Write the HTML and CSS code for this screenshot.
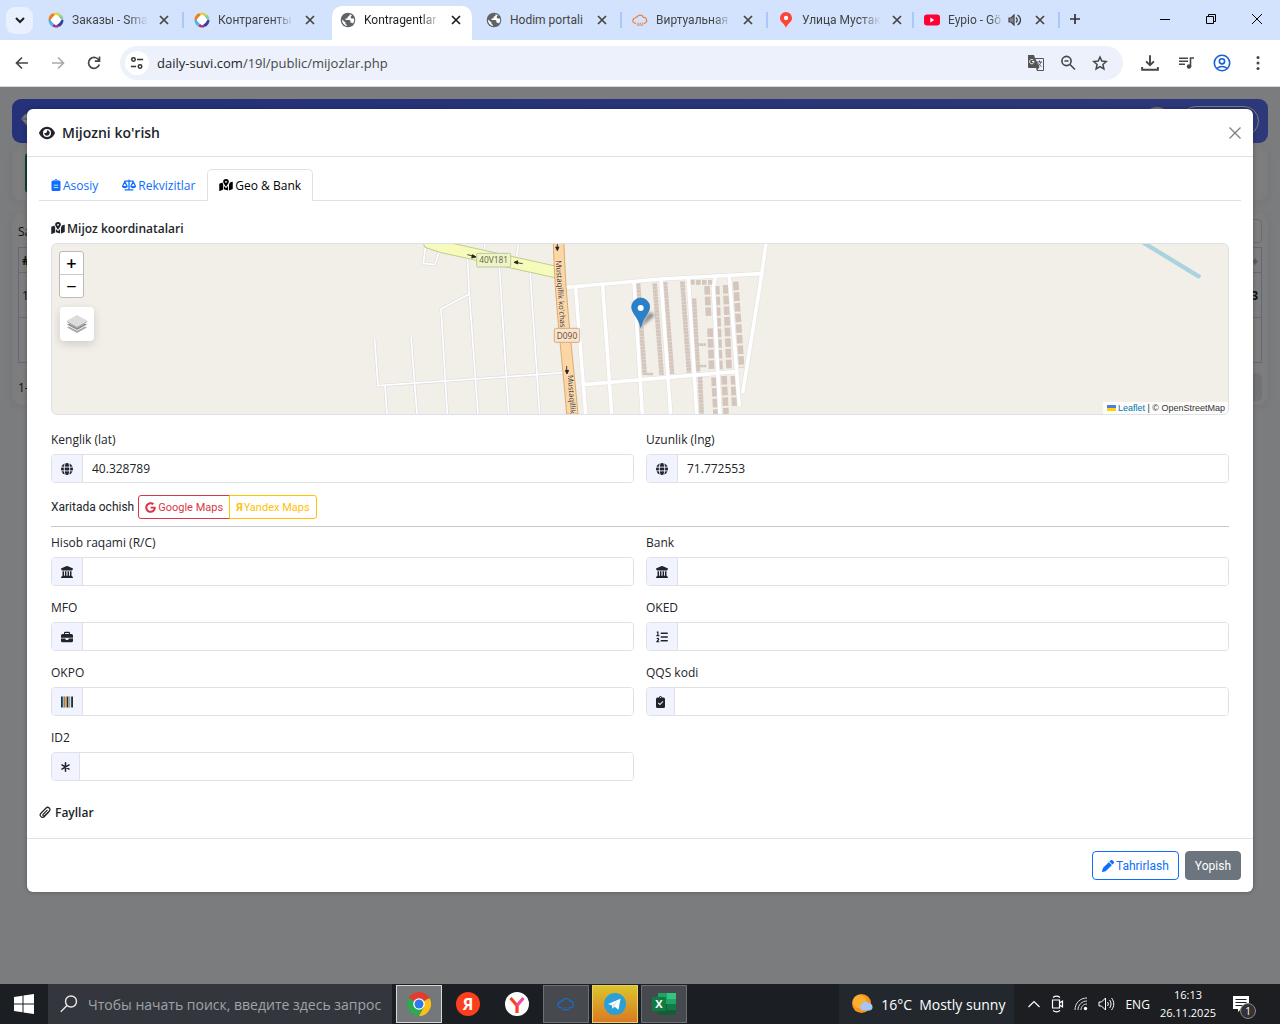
FILE: index.html
```html
<!DOCTYPE html>
<html lang="uz">
<head>
    <meta charset="UTF-8">
    <meta name="viewport" content="width=device-width, initial-scale=1.0">
    <title>Kontragentlar</title>
    <link rel="stylesheet" href="styles.css">
</head>
<body>
    <svg class="sprite" aria-hidden="true">
        <symbol id="i-close" viewBox="0 0 12 12"><path d="M2 2l8 8M10 2l-8 8" fill="none" stroke="currentColor" stroke-width="1.7"/></symbol>
        <symbol id="i-globe" viewBox="0 0 16 16">
            <circle cx="8" cy="8" r="7.3" fill="#5f6368"/>
            <path d="M9.500 2.200v1.500L7.500 5v1.500H5.500V8H9.500l1 1v1.800h1.800l.7 1A6 6 0 0 0 14 6.500h-2.500L10.500 5 12 3.200zM2 7.500 5.500 10.500V12l1.500 1v1A6.200 6.200 0 0 1 2 7.500z" fill="#fff"/>
        </symbol>
        <symbol id="i-ring" viewBox="0 0 16 16">
            <g fill="none" stroke-width="3">
                <path d="M2 8a6 6 0 0 1 4-5.6" stroke="#ef7d1a"/>
                <path d="M6 2.300a6 6 0 0 1 6 1.200" stroke="#d9d640"/>
                <path d="M12 3.500A6 6 0 0 1 14 8" stroke="#8cc9a0"/>
                <path d="M14 8a6 6 0 0 1-4 5.700" stroke="#3a3f9e"/>
                <path d="M10 13.700a6 6 0 0 1-5-.6" stroke="#a6327c"/>
                <path d="M5 13.100A6 6 0 0 1 2 8" stroke="#4ab5e6"/>
            </g>
            <rect x="4" y="4" width="8" height="8" rx="1" fill="#fff" transform="rotate(45 8 8)"/>
        </symbol>
        <symbol id="i-cloud" viewBox="0 0 24 20">
            <path d="M6 15H5.500a4 4 0 0 1-.5-8 4 4 0 0 1 3-2 5 5 0 0 1 9 1 4.300 4.300 0 0 1 5 4.200A4.500 4.500 0 0 1 18.500 15H18" fill="none" stroke="currentColor" stroke-width="1.8"/>
            <path d="M8 15h2M11.500 15h2M15 15h2M7 17.500h10" stroke="currentColor" stroke-width="1.5"/>
        </symbol>
        <symbol id="i-eye" viewBox="0 0 576 512"><path fill="currentColor" d="M288 32c-80.800 0-145.500 36.800-192.600 80.600C48.600 156 17.300 208 2.500 243.700c-3.300 7.900-3.300 16.700 0 24.600C17.300 304 48.600 356 95.400 399.400 142.500 443.200 207.200 480 288 480s145.500-36.800 192.600-80.600c46.800-43.500 78.100-95.400 93-131.100 3.300-7.900 3.300-16.700 0-24.600-14.900-35.700-46.200-87.700-93-131.100C433.500 68.800 368.800 32 288 32zM144 256a144 144 0 1 1 288 0 144 144 0 1 1-288 0zm144-64c0 35.300-28.700 64-64 64-7.100 0-13.900-1.200-20.300-3.300-5.500-1.800-11.900 1.600-11.700 7.400.3 6.900 1.300 13.800 3.200 20.700 13.700 51.200 66.400 81.600 117.600 67.900s81.600-66.400 67.900-117.600c-11.100-41.500-47.800-69.400-88.600-71.100-5.800-.2-9.200 6.100-7.400 11.700 2.100 6.400 3.300 13.200 3.300 20.300z"/></symbol>
        <symbol id="i-clipboard" viewBox="0 0 12 16">
            <path fill="currentColor" fill-rule="evenodd" d="M6 0a2 2 0 0 0-1.900 2H2a2 2 0 0 0-2 2v10a2 2 0 0 0 2 2h8a2 2 0 0 0 2-2V4a2 2 0 0 0-2-2H7.900A2 2 0 0 0 6 0zm0 1.300a.7.7 0 1 1 0 1.400.7.7 0 0 1 0-1.400zM3 7.500h6v1H3zM3 10.500h6v1H3z"/>
        </symbol>
        <symbol id="i-check" viewBox="0 0 12 16">
            <path fill="currentColor" fill-rule="evenodd" d="M6 0a2 2 0 0 0-1.900 2H2a2 2 0 0 0-2 2v10a2 2 0 0 0 2 2h8a2 2 0 0 0 2-2V4a2 2 0 0 0-2-2H7.900A2 2 0 0 0 6 0zm0 1.300a.7.7 0 1 1 0 1.400.7.7 0 0 1 0-1.400zM9.800 7.700 5.300 12.400 2.500 9.700l1-1.100 1.800 1.600 3.500-3.600z"/>
        </symbol>
        <symbol id="i-scale" viewBox="0 0 20 16">
            <path fill="none" stroke="currentColor" stroke-width="1.8" stroke-linecap="round" d="M4 2.500h12M10 1v13.500M4.500 15h11M4 3.500.9 9.500M4 3.500l3.100 6M16 3.500l-3.100 6M16 3.500l3.100 6"/>
            <path fill="currentColor" d="M0 9.500h8a4 3 0 0 1-8 0zM12 9.500h8a4 3 0 0 1-8 0z"/>
        </symbol>
        <symbol id="i-mapped" viewBox="0 0 18 16">
            <path fill="currentColor" fill-rule="evenodd" d="M9 0a3.800 3.800 0 0 0-3.800 3.800C5.200 5.500 7.400 8.500 8.500 9.800a.6.6 0 0 0 1 0c1.100-1.300 3.300-4.300 3.300-6A3.800 3.800 0 0 0 9 0zm0 2.500a1.300 1.300 0 1 1 0 2.600 1.300 1.300 0 0 1 0-2.600zM4.300 4.800c.2 1 .5 1.800.9 2.600V14L.8 15.900A.6.6 0 0 1 0 15.400V7c0-.5.3-.9.700-1zM13 7.400c.5-.8 1-1.800 1.200-2.600l3-1.200c.4-.1.800.1.800.5v8.500c0 .4-.3.800-.7 1L13 15.300zM6.200 8.900c.5.800 1 1.500 1.500 2 .7.9 1.900.9 2.600 0 .5-.5 1-1.200 1.500-2v6.500l-5.600-1.600z"/>
        </symbol>
        <symbol id="i-world" viewBox="0 0 16 16">
            <circle cx="8" cy="8" r="8" fill="currentColor"/>
            <path d="M0 5.500h16M0 10.500h16M5.500 0c-1.500 5-1.500 11 0 16M10.500 0c1.500 5 1.500 11 0 16" fill="none" stroke="#f1f4ff" stroke-width="1.2"/>
        </symbol>
        <symbol id="i-bank" viewBox="0 0 512 512"><path fill="currentColor" d="M243.400 2.600l-224 96c-14 6-21.800 21-18.700 35.800S16.800 160 32 160v8c0 13.300 10.700 24 24 24h400c13.300 0 24-10.700 24-24v-8c15.200 0 28.300-10.700 31.300-25.600s-4.800-29.900-18.700-35.800l-224-96c-8-3.400-17.200-3.400-25.200 0zM128 224H64v196.300l-49.800 33.100C2.500 461.200-2.800 475.800 1.300 489.300S17.900 512 32 512h448c14.100 0 26.500-9.200 30.600-22.700s-1.100-28.100-12.900-35.900L448 420.300V224h-64v192h-40V224h-64v192h-48V224h-64v192h-40z"/></symbol>
        <symbol id="i-case" viewBox="0 0 16 16">
            <path fill="currentColor" fill-rule="evenodd" d="M5.500 1h5A1.500 1.500 0 0 1 12 2.500V4h2a2 2 0 0 1 2 2v3H0V6a2 2 0 0 1 2-2h2V2.500A1.500 1.500 0 0 1 5.500 1zm0 1.500V4h5V2.500zM0 10h6v1a1 1 0 0 0 1 1h2a1 1 0 0 0 1-1v-1h6v3a2 2 0 0 1-2 2H2a2 2 0 0 1-2-2z"/>
        </symbol>
        <symbol id="i-list" viewBox="0 0 16 16">
            <path fill="none" stroke="currentColor" stroke-width="1.900" stroke-linecap="round" d="M7 3h8M7 8h8M7 13h8"/>
            <path fill="none" stroke="currentColor" stroke-width="1.600" d="M1 1.500h1.500V6M.5 6.200h4M1 10.500c1-1 2.600-.8 2.600.4 0 1-1.400 1.800-2.400 3.400H4.500"/>
        </symbol>
        <symbol id="i-barcode" viewBox="0 0 13 12"><path d="M0 0h2v12H0zM6 0h2v12H6zM11 0h2v12h-2z" fill="#22303a"/><path d="M3 0h2v12H3zM9 0h1v12H9z" fill="#c8781e"/><path d="M2 0h1v12H2zM8 0h1v12H8z" fill="#6fb3c8"/></symbol>
        <symbol id="i-star6" viewBox="0 0 14 16"><path d="M7 1.500v13M1.500 4.800l11 6.400M12.500 4.800l-11 6.400" stroke="currentColor" stroke-width="2.400" stroke-linecap="round"/></symbol>
        <symbol id="i-clip" viewBox="0 0 14 16"><path d="M11.300 7.700 6.200 13a2.900 2.900 0 0 1-4.200-4.100l6.300-6.400a2.700 2.700 0 0 1 3.900 3.900L6.500 12a1.200 1.200 0 0 1-1.800-1.700L9.500 5.300" fill="none" stroke="currentColor" stroke-width="1.5" stroke-linecap="round"/></symbol>
        <symbol id="i-pencil" viewBox="0 0 512 512"><path fill="currentColor" d="M410.300 231l11.300-11.300-33.900-33.900-62.100-62.100-33.900-33.900-11.300 11.300-22.600 22.600L58.600 322.900c-10.400 10.400-18 23.300-22.200 37.400L1 480.700c-2.500 8.400-.2 17.500 6.100 23.700s15.300 8.500 23.700 6.100l120.300-35.400c14.100-4.200 27-11.800 37.400-22.200L387.700 253.700zM362.700 18.700 314.300 67.100l130 130 48.500-48.500c25-25 25-65.500 0-90.500l-39.500-39.400c-25-25-65.500-25-90.600 0z"/></symbol>
        <symbol id="i-google" viewBox="0 0 488 512"><path fill="currentColor" d="M488 261.800C488 403.300 391.100 504 248 504 110.800 504 0 393.200 0 256S110.800 8 248 8c66.800 0 123 24.500 166.300 64.900l-67.500 64.900C258.500 52.600 94.300 116.600 94.300 256c0 86.500 69.100 156.600 153.700 156.600 98.200 0 135-70.400 140.800-106.900H248v-85.300h236.100c2.300 12.700 3.900 24.900 3.900 41.400z"/></symbol>
    </svg>

    <!-- Brauzer tablari -->
    <div class="tabstrip">
        <button class="tab-menu" aria-label="Tablar"><svg width="12" height="12" viewBox="0 0 12 12"><path d="M2 4l4 4 4-4" fill="none" stroke="#1f1f1f" stroke-width="2"/></svg></button>
        <div class="tab sep"><svg class="fav"><use href="#i-ring"/></svg><span class="tab-title fade">Заказы - Sma</span><button aria-label="Yopish"><svg><use href="#i-close"/></svg></button></div>
        <div class="tab"><svg class="fav"><use href="#i-ring"/></svg><span class="tab-title fade">Контрагенты</span><button aria-label="Yopish"><svg><use href="#i-close"/></svg></button></div>
        <div class="tab active"><svg class="fav"><use href="#i-globe"/></svg><span class="tab-title fade">Kontragentlar</span><button aria-label="Yopish"><svg><use href="#i-close"/></svg></button></div>
        <div class="tab sep"><svg class="fav"><use href="#i-globe"/></svg><span class="tab-title">Hodim portali</span><button aria-label="Yopish"><svg><use href="#i-close"/></svg></button></div>
        <div class="tab sep"><svg class="fav orange"><use href="#i-cloud"/></svg><span class="tab-title fade">Виртуальная</span><button aria-label="Yopish"><svg><use href="#i-close"/></svg></button></div>
        <div class="tab sep"><svg class="fav" viewBox="0 0 16 16"><path d="M8 0a6 6 0 0 0-6 6c0 4.500 4.500 5 6 10 1.500-5 6-5.500 6-10a6 6 0 0 0-6-6z" fill="#f43"/><circle cx="8" cy="6" r="2.2" fill="#fff"/></svg><span class="tab-title fade">Улица Мустак</span><button aria-label="Yopish"><svg><use href="#i-close"/></svg></button></div>
        <div class="tab sep"><svg class="fav" viewBox="0 0 16 16"><rect y="2.500" width="16" height="11" rx="3" fill="#f03"/><path d="M6.300 5.500v5l4-2.500z" fill="#fff"/></svg><span class="tab-title fade">Eypio - Gö</span>
            <svg class="sound" viewBox="0 0 14 12"><path d="M1 4h2l3-3v10L3 8H1z" fill="#888" stroke="#444" stroke-width="1.200"/><path d="M8 3.500c1.500 1.500 1.500 3.500 0 5M9.500 1c4 2.500 4 7.500 0 10" fill="none" stroke="#444" stroke-width="1.300"/></svg>
            <button aria-label="Yopish"><svg><use href="#i-close"/></svg></button></div>
        <button class="new-tab" aria-label="Yangi tab"><svg width="12" height="12" viewBox="0 0 12 12"><path d="M6 1v10M1 6h10" stroke="#333" stroke-width="1.7"/></svg></button>
        <div class="window-buttons">
            <button aria-label="Kichraytirish"><svg viewBox="0 0 12 12"><path d="M1 6.500h10" stroke="#000"/></svg></button>
            <button aria-label="Tiklash"><svg viewBox="0 0 12 12"><path d="M1.500 3.500h7v7h-7zM3.500 3.500v-2h7v7h-2" fill="none" stroke="#000"/></svg></button>
            <button aria-label="Oynani yopish"><svg viewBox="0 0 12 12"><path d="M1 1l10 10M11 1L1 11" stroke="#000"/></svg></button>
        </div>
    </div>

    <!-- Manzil qatori -->
    <div class="toolbar">
        <button aria-label="Orqaga"><svg viewBox="0 0 16 16"><path d="M14 8H3M8 2.500 2.500 8 8 13.500" fill="none" stroke="#444746" stroke-width="1.7"/></svg></button>
        <button aria-label="Oldinga"><svg viewBox="0 0 16 16"><path d="M2 8h11M8 2.500 13.500 8 8 13.500" fill="none" stroke="#a9abad" stroke-width="1.7"/></svg></button>
        <button aria-label="Yangilash"><svg viewBox="0 0 16 16"><path d="M13.300 9.500A5.500 5.500 0 1 1 13 5.500M13.500 1.500v4.700H8.800" fill="none" stroke="#444746" stroke-width="1.7"/></svg></button>
        <div class="omnibox">
            <span class="site-info"><svg viewBox="0 0 16 16"><path d="M8 4h7M1 12h6" stroke="#333" stroke-width="1.7"/><circle cx="4" cy="4" r="2" fill="none" stroke="#333" stroke-width="1.7"/><circle cx="11.500" cy="12" r="2" fill="none" stroke="#333" stroke-width="1.7"/></svg></span>
            <span class="url">daily-suvi.com<i>/19l/public/mijozlar.php</i></span>
            <button aria-label="Tarjima"><svg viewBox="0 0 16 16"><path d="M0 0h6l1 3h8a1 1 0 0 1 1 1v11a1 1 0 0 1-1 1H9l-1-3H1a1 1 0 0 1-1-1z" fill="#555"/><path d="M7.500 4h7.500v11H9.500l2-3z" fill="#ecf1fb"/><path d="M6 6.500H4M6 6.500A2.200 2.200 0 1 1 5.300 5" fill="none" stroke="#fff"/><path d="M9 7h5M11.500 5.500V7M13 7c-.5 2-2 3.500-3 4M10.500 8.500c.5 1 1.500 2 3 3" fill="none" stroke="#555"/></svg></button>
            <button aria-label="Masshtab"><svg viewBox="0 0 16 16"><circle cx="6.500" cy="6" r="4.600" fill="none" stroke="#444746" stroke-width="1.6"/><path d="M4.500 6h4M10 9.500l5 5" stroke="#444746" stroke-width="1.6"/></svg></button>
            <button aria-label="Xatcho'p"><svg viewBox="0 0 16 16"><path d="M8 2l1.800 4.100 4.500.4-3.400 3 1 4.400L8 11.600l-3.900 2.300 1-4.400-3.400-3 4.500-.4z" fill="none" stroke="#444746" stroke-width="1.5"/></svg></button>
        </div>
        <button aria-label="Yuklamalar"><svg class="big" viewBox="0 0 16 16"><path d="M8 1v8.500M4.500 6.500 8 10l3.500-3.500M1 11.500V14h14v-2.500" fill="none" stroke="#444746" stroke-width="1.7"/></svg></button>
        <button aria-label="Media"><svg viewBox="0 0 16 16"><path d="M1 3.200h9M1 6.200h9M1 9.200h6M12.500 12V3H16" fill="none" stroke="#444746" stroke-width="1.6"/><circle cx="11" cy="11.500" r="2.2" fill="#444746"/></svg></button>
        <button aria-label="Profil"><svg class="big" viewBox="0 0 18 18"><circle cx="9" cy="9" r="7.700" fill="none" stroke="#1760d5" stroke-width="1.6"/><circle cx="9" cy="7.300" r="2.600" fill="none" stroke="#1760d5" stroke-width="1.6"/><path d="M3.800 14.500c3-2.700 7.400-2.700 10.400 0" fill="none" stroke="#1760d5" stroke-width="1.6"/></svg></button>
        <button aria-label="Menyu"><svg viewBox="0 0 16 16"><g fill="#444746"><circle cx="8" cy="2.500" r="1.5"/><circle cx="8" cy="8" r="1.5"/><circle cx="8" cy="13.500" r="1.5"/></g></svg></button>
    </div>

    <main class="viewport">
        <!-- Orqa sahifa -->
        <div class="page">
            <header class="topbar">
                <svg width="18" height="16" viewBox="0 0 18 16"><path d="M4 1h10l4 5-9 10L0 6zM0 6h18M6 6l3 10 3-10" fill="#fff" stroke="#8a96d8"/></svg>
                <span class="avatar"></span>
                <span class="pill"></span>
            </header>
            <div class="card actions"><span class="green"></span></div>
            <div class="card list">
                <div class="list-bar"><span>Sahifada</span><span class="search-box"></span></div>
                <table>
                    <tr><th>#</th><th class="end sort">♦</th></tr>
                    <tr><td>1</td><td class="end"><b>3</b></td></tr>
                    <tr><td></td><td></td></tr>
                </table>
                <div class="list-bar"><span>1-1</span><span class="pager"></span></div>
            </div>
        </div>
        <div class="backdrop"></div>

        <!-- Modal -->
        <section class="modal">
            <header class="modal-header">
                <h1><svg><use href="#i-eye"/></svg> Mijozni ko'rish</h1>
                <button class="modal-close" aria-label="Yopish"><svg viewBox="0 0 12 12"><path d="M.5.5l11 11M11.500.5l-11 11" stroke="#7f7f7f" stroke-width="1.3"/></svg></button>
            </header>
            <div class="modal-body">
                <nav class="nav-tabs">
                    <a href="#asosiy"><svg class="narrow"><use href="#i-clipboard"/></svg>Asosiy</a>
                    <a href="#rekvizitlar"><svg class="wide"><use href="#i-scale"/></svg>Rekvizitlar</a>
                    <a href="#geo" class="active"><svg class="wide"><use href="#i-mapped"/></svg>Geo &amp; Bank</a>
                </nav>

                <div class="tab-content">
                    <h2><svg><use href="#i-mapped"/></svg>Mijoz koordinatalari</h2>
                    <div class="map">
                        <svg class="map-tiles" viewBox="0 0 1176 170" preserveAspectRatio="xMidYMid slice">
                            <defs>
                                <filter id="soft" x="-50%" y="-50%" width="200%" height="200%"><feGaussianBlur stdDeviation="4"/></filter>
                            </defs>
                            <g transform="translate(308 -4) scale(.33333)">
                                <g fill="none" stroke="#dddbe0" stroke-width="9" stroke-linejoin="round">
                                    <path d="M44 298l10 139 560-39M153 290l18 232M75 437l6 85M322 50l6 112-85 44 19 316M328 162l26 360M375 10l-2 20M418 80l28 442M476 10l-6 40M510 95l29 427M196 20l-6 50 34 4 14-38"/>
                                </g>
                                <g fill="none" stroke="#fff" stroke-width="5" stroke-linejoin="round">
                                    <path d="M44 298l10 139 560-39M153 290l18 232M75 437l6 85M322 50l6 112-85 44 19 316M328 162l26 360M375 10l-2 20M418 80l28 442M476 10l-6 40M510 95l29 427M196 20l-6 50 34 4 14-38"/>
                                </g>
                                <!-- uylar -->
                                <g fill="none" stroke="#d4c6bd" stroke-dasharray="9 1">
                                    <path stroke-width="14" d="M834 130l20 274M884 130l21 275M915 126l21 276M967 124l20 274M1002 175l12 222M1020 410l5 112"/>
                                    <path stroke-width="8" d="M850 402h30M1010 314h28M1010 378h30"/>
                                </g>
                                <g fill="none" stroke="#d4c6bd" stroke-width="17" stroke-dasharray="26 6">
                                    <path d="M1041 138l5 95M1050 265l5 125M1070 138l10 250M1097 135l10 250M1127 125l18 258M1062 412l6 110M1092 408l6 114M1120 408l4 90"/>
                                    <path stroke-width="14" stroke-dasharray="14 4" d="M990 127h66"/>
                                </g>
                                <g fill="none" stroke="#e2dfde" stroke-width="14">
                                    <path d="M618 142l286-25 300-16M647 145l30 377M728 138l27 384M822 126l25 396M903 120l29 402M985 115l25 407M1066 112l-6 30 20 380M1108 108l30 390M1218 10l-14 100-56 350M668 434l468-40"/>
                                </g>
                                <g fill="none" stroke="#fff" stroke-width="11">
                                    <path d="M618 142l286-25 300-16M647 145l30 377M728 138l27 384M822 126l25 396M903 120l29 402M985 115l25 407M1066 112l-6 30 20 380M1108 108l30 390M1218 10l-14 100-56 350M668 434l468-40"/>
                                </g>
                                <path d="M190 10l60-6 345 76-2 35-353-78-45-15z" fill="#f6fabb" stroke="#a9b76b" stroke-width="2"/>
                                <path d="M580 10h32c4 170 28 350 42 512h-34C606 350 584 180 580 10z" fill="#fcd6a4" stroke="#c9924f" stroke-width="2"/>
                                <g stroke="#222" stroke-width="2.5" fill="#222">
                                    <path d="M322 44l22 5M592 8v20M620 378v20M488 71l-22-4"/>
                                    <path d="M349 51l-12-7-2 10zM592 32l-5-11h10zM621 402l-5-11h10zM462 67l11-5v10z"/>
                                </g>
                                <g fill="#3a2c20" font-family="Open Sans, sans-serif" font-size="23" stroke="#fce4c4" stroke-width="3" paint-order="stroke">
                                    <text transform="translate(587 62) rotate(86)">Mustaqillik ko'chasi</text>
                                    <text transform="translate(623 406) rotate(86)">Mustaqillik</text>
                                </g>
                                <rect x="350" y="40" width="102" height="41" rx="4" fill="#eef3c8" stroke="#bfc79b" stroke-width="3"/>
                                <rect x="583" y="265" width="76" height="42" rx="4" fill="#f8e3cf" stroke="#d3ad85" stroke-width="3"/>
                                <g font-family="Open Sans, sans-serif" font-size="25" font-weight="500" text-anchor="middle">
                                    <text x="401" y="70" fill="#60653c">40V181</text>
                                    <text x="621" y="296" fill="#6b4a2c">D090</text>
                                </g>
                                <path d="M2350 8l166 101" stroke="#aad3df" stroke-width="13" stroke-linecap="round"/>
                                <path d="M843 262l40-34c-6-20-24-14-40 34z" opacity=".4" filter="url(#soft)"/>
                                <path d="M842 262c-5-28-27-42-27-61a27 27 0 0 1 54 0c0 19-22 33-27 61z" fill="#2a81cb" stroke="#1c6cae" stroke-width="2"/>
                                <circle cx="842" cy="204" r="9" fill="#fff"/>
                            </g>
                        </svg>
                        <div class="map-controls">
                            <div class="zoom"><button>+</button><button>−</button></div>
                            <button class="layers" aria-label="Qatlamlar"><svg viewBox="0 0 22 22"><path d="M1 14.500l10 5.500 10-5.500-2-1-8 4.300-8-4.300z" fill="#a9a9a9"/><path d="M1 11.500l10 5.500 10-5.500-2-1-8 4.300-8-4.300z" fill="#8f8f8f"/><path d="M1 7.500l10-5.500 10 5.500L11 13.500z" fill="#dcdcdc"/><path d="M1 8.500l10 5.800 10-5.800" fill="none" stroke="#999"/></svg></button>
                        </div>
                        <div class="attribution"><svg width="9" height="6" viewBox="0 0 9 6"><path fill="#4c7be1" d="M0 0h9v3H0z"/><path fill="#ffd500" d="M0 3h9v3H0z"/></svg><a href="#leaflet">Leaflet</a> | © OpenStreetMap</div>
                    </div>

                    <form>
                        <div class="row">
                            <div class="field"><label for="lat">Kenglik (lat)</label><div class="group"><span><svg><use href="#i-world"/></svg></span><input type="text" id="lat" value="40.328789"></div></div>
                            <div class="field"><label for="lng">Uzunlik (lng)</label><div class="group"><span><svg><use href="#i-world"/></svg></span><input type="text" id="lng" value="71.772553"></div></div>
                        </div>
                        <div class="open-map">
                            <span>Xaritada ochish</span>
                            <a class="google" href="#google"><svg><use href="#i-google"/></svg>Google Maps</a><a class="yandex" href="#yandex"><b>Я</b>Yandex Maps</a>
                        </div>
                        <hr>
                        <div class="row">
                            <div class="field"><label for="rc">Hisob raqami (R/C)</label><div class="group"><span><svg><use href="#i-bank"/></svg></span><input type="text" id="rc"></div></div>
                            <div class="field"><label for="bank">Bank</label><div class="group"><span><svg><use href="#i-bank"/></svg></span><input type="text" id="bank"></div></div>
                            <div class="field"><label for="mfo">MFO</label><div class="group"><span><svg><use href="#i-case"/></svg></span><input type="text" id="mfo"></div></div>
                            <div class="field"><label for="oked">OKED</label><div class="group"><span><svg><use href="#i-list"/></svg></span><input type="text" id="oked"></div></div>
                            <div class="field"><label for="okpo">OKPO</label><div class="group"><span><svg><use href="#i-barcode"/></svg></span><input type="text" id="okpo"></div></div>
                            <div class="field"><label for="qqs">QQS kodi</label><div class="group"><span><svg class="narrow"><use href="#i-check"/></svg></span><input type="text" id="qqs"></div></div>
                            <div class="field"><label for="id2">ID2</label><div class="group"><span><svg class="narrow"><use href="#i-star6"/></svg></span><input type="text" id="id2"></div></div>
                        </div>
                    </form>
                </div>
                <h3><svg><use href="#i-clip"/></svg>Fayllar</h3>
            </div>
            <footer class="modal-footer">
                <button class="btn-edit"><svg><use href="#i-pencil"/></svg>Tahrirlash</button>
                <button class="btn-close">Yopish</button>
            </footer>
        </section>
    </main>

    <!-- Vazifalar paneli -->
    <div class="taskbar">
        <button class="start" aria-label="Пуск"><svg width="20" height="20" viewBox="0 0 20 20"><path d="M0 3l8.500-1.200v7.700H0zM9.500 1.600 20 0v9.500H9.500zM0 10.500h8.500v7.700L0 17zM9.500 10.500H20V20L9.500 18.400z" fill="#fff"/></svg></button>
        <label class="task-search"><svg width="18" height="18" viewBox="0 0 18 18"><circle cx="11" cy="6.500" r="5.500" fill="none" stroke="#e8e8e8" stroke-width="1.4"/><path d="M7 10.500.8 16.700" stroke="#e8e8e8" stroke-width="1.4"/></svg><input type="text" placeholder="Чтобы начать поиск, введите здесь запрос" aria-label="Поиск"></label>
        <div class="apps">
            <button class="current" aria-label="Chrome"><svg viewBox="0 0 24 24"><path d="M12 12 1.600 6A12 12 0 0 1 22.400 6z" fill="#e33b2e"/><path d="M12 12 22.400 6A12 12 0 0 1 12 24z" fill="#fbc116"/><path d="M12 12l5 3-5 9A12 12 0 0 1 1.600 6z" fill="#2da94f"/><path d="M12 6h10.400" stroke="#e33b2e"/><circle cx="12" cy="12" r="5.800" fill="#fff"/><circle cx="12" cy="12" r="4.500" fill="#2f78e8"/></svg></button>
            <button aria-label="Яндекс"><svg viewBox="0 0 24 24"><circle cx="12" cy="12" r="12" fill="#fc3f1d"/><text x="12" y="18" text-anchor="middle" font-size="16" font-weight="700" fill="#fff" font-family="Open Sans, sans-serif">Я</text></svg></button>
            <button aria-label="Яндекс Браузер"><svg viewBox="0 0 24 24"><circle cx="12" cy="12" r="12" fill="#fff"/><path d="M5.500 6 12 13.500V21" fill="none" stroke="#fc3f1d" stroke-width="3.2"/><path d="M12 13.500 18.500 6" stroke="#f04ba0" stroke-width="3.2"/></svg></button>
            <button class="open blue" aria-label="АТС"><svg class="cloud"><use href="#i-cloud"/></svg></button>
            <button class="alert" aria-label="Telegram"><svg viewBox="0 0 24 24"><circle cx="12" cy="12" r="11" fill="#2a9fd8"/><path d="M5 12l12.500-5.200-2 11-4-3-2.200 2-.3-3.400z" fill="#fff"/><path d="M9 13.500l5.500-4.200-3.800 5.200" fill="#c5dff0"/></svg></button>
            <button class="open" aria-label="Excel"><svg viewBox="0 0 24 24"><path d="M6 1h9v11H6z" fill="#21a366"/><path d="M15 1h9v6h-9z" fill="#33c481"/><path d="M15 7h9v5h-9z" fill="#21a366"/><path d="M6 12h18v11H6z" fill="#185c37"/><path d="M15 12h9v6h-9z" fill="#107c41"/><rect y="5" width="14" height="14" rx="1" fill="#107c41"/><text x="7" y="16" text-anchor="middle" font-size="11" font-weight="700" fill="#fff" font-family="Open Sans, sans-serif">X</text></svg></button>
        </div>
        <div class="weather"><svg width="23" height="21" viewBox="0 0 24 22"><circle cx="11" cy="10" r="10" fill="#f7941d"/><circle cx="9" cy="8" r="7" fill="#fbb034"/><path d="M11 17a3.500 3.500 0 0 1 0-6 4.500 4.500 0 0 1 8-1 3.700 3.700 0 0 1 1 7.200z" fill="#a5c5f5"/></svg><span>16°C</span><span>Mostly sunny</span></div>
        <div class="tray">
            <svg width="12" height="12" viewBox="0 0 12 12"><path d="M.5 9 6 3.500 11.500 9" fill="none" stroke="#fff" stroke-width="1.2"/></svg>
            <svg width="14" height="18" viewBox="0 0 14 18"><path d="M2.500 5h7v8h-7zM9.500 8l3-2v6l-3-2M3 2.500C5 1 8 1 10 2.500M3 15.500c2 1.500 5 1.500 7 0" fill="none" stroke="#fff" stroke-width="1.2"/></svg>
            <svg width="14" height="14" viewBox="0 0 14 14"><path d="M1 13C1 6 6 1 13 1M4 13c0-5 4-9 9-9M7 13c0-3.500 2.500-6 6-6" fill="none" stroke="#ddd"/><circle cx="11.500" cy="11.500" r="1.7" fill="#fff"/></svg>
            <svg width="17" height="14" viewBox="0 0 17 14"><path d="M1 5h2.500l4-4v12l-4-4H1z" fill="none" stroke="#fff"/><path d="M9.500 5c1 1.200 1 2.800 0 4M11.500 3c2 2.400 2 5.600 0 8M13.500 1c3 3.600 3 8.400 0 12" fill="none" stroke="#fff"/></svg>
            <span class="lang">ENG</span>
            <div class="clock">16:13<br>26.11.2025</div>
            <div class="notes"><svg width="16" height="16" viewBox="0 0 16 16"><path d="M0 0h16v13H8l-3 3v-3H0z" fill="#fff"/><path d="M2.500 3.500h11M2.500 6.500h11M2.500 9.500h7" stroke="#1c1e22"/></svg><b>1</b></div>
        </div>
    </div>
</body>
</html>
```

FILE: styles.css
```css
* { box-sizing: border-box; }
body { margin: 0; min-height: 100vh; display: flex; flex-direction: column; font-family: "Open Sans", "Noto Sans", sans-serif; font-size: 12px; color: #212529; background: #1c1f24; }
button { font-family: inherit; border: none; background: none; padding: 0; cursor: pointer; }
a { text-decoration: none; }
.sprite { display: none; }

/* Tablar */
.tabstrip { display: flex; align-items: center; height: 40px; background: #d3e3fd; color: #444; font-family: Roboto, "Open Sans", sans-serif; }
.tab-menu { width: 27px; height: 27px; margin: 0 5px 0 6px; border-radius: 9px; background: #e9f1fe; display: flex; align-items: center; justify-content: center; }
.tab { display: flex; align-items: center; width: 146px; height: 34px; padding-left: 10px; position: relative; margin-top: 6px; padding-bottom: 6px; }
.fav { width: 16px; height: 16px; margin-right: 8px; flex: none; }
.orange { color: #ef7d3b; }
.tab-title { flex: 1; white-space: nowrap; }
.fade { -webkit-mask-image: linear-gradient(to right, #000 75%, transparent); mask-image: linear-gradient(to right, #000 75%, transparent); }
.tab button { width: 12px; height: 12px; margin: 0 14px 0 10px; flex: none; color: #444; }
.tab button svg { width: 12px; height: 12px; display: block; }
.tab .sound { width: 14px; height: 12px; margin: 0 2px 0 4px; flex: none; }
.tab.sep::after { content: ""; width: 2px; height: 16px; background: #a8c7fa; position: absolute; right: 0; top: 6px; }
.tab.active { background: #fff; width: 140px; margin-left: 2px; margin-right: 4px; padding-left: 8px; border-radius: 10px 10px 0 0; color: #1f1f1f; }
.tab.active button { margin-right: 10px; color: #1f1f1f; }
.new-tab { width: 30px; height: 30px; }
.window-buttons { display: flex; margin-left: auto; }
.window-buttons button { width: 46px; height: 40px; }
.window-buttons svg { width: 12px; height: 12px; }

/* Manzil qatori */
.toolbar { display: flex; align-items: center; height: 47px; padding: 0 4px; background: #fff; border-bottom: 1px solid #d5d7db; }
.toolbar button { width: 36px; height: 32px; display: flex; align-items: center; justify-content: center; }
.toolbar svg { width: 16px; height: 16px; }
.toolbar svg.big { width: 18px; height: 18px; }
.omnibox { flex: 1; display: flex; align-items: center; height: 34px; margin: 0 9px 0 8px; padding: 0 7px 0 5px; border-radius: 17px; background: #ecf1fb; }
.omnibox button { width: 32px; }
.site-info { width: 24px; height: 24px; border-radius: 12px; background: #fff; display: flex; align-items: center; justify-content: center; margin-right: 8px; }
.site-info svg { width: 14px; height: 14px; }
.url { flex: 1; font-size: 13px; color: #1f1f1f; }
.url i { font-style: normal; color: #474747; }

/* Sahifa */
.viewport { flex: 1; display: grid; background: #f7f8fc; }
.page, .backdrop, .modal { grid-area: 1 / 1; min-width: 0; }
.backdrop { background: rgba(0, 0, 0, 0.5); z-index: 1; }
.page { padding: 12px; }
.topbar { display: flex; align-items: center; height: 44px; padding: 0 9px; border-radius: 9px; background: linear-gradient(135deg, #4a62f0, #5c72f4); }
.avatar { width: 28px; height: 28px; margin: 0 10px 0 auto; border-radius: 14px; background: #f0e6dc; }
.pill { width: 78px; height: 30px; border: 1px solid #fff; border-radius: 15px; }
.card { background: #fafafd; border-radius: 10px; box-shadow: 0 2px 8px rgba(40, 60, 160, 0.08); }
.actions { height: 54px; margin: 4px 0 12px; padding: 6px 13px; }
.green { display: block; width: 70px; height: 40px; border-radius: 4px; background: #198754; }
.list { padding: 6px; height: 192px; }
.list-bar { display: flex; align-items: center; justify-content: space-between; height: 24px; }
.search-box { width: 160px; height: 24px; border: 1px solid #d5d9e2; border-radius: 4px; }
.pager { width: 60px; height: 28px; border-radius: 5px; background: #e4e6ee; }
.list table { width: 100%; margin: 4px 0 12px; border-collapse: collapse; }
.list th, .list td { height: 45px; padding: 0 3px; border: 1px solid #c9d2f5; text-align: left; }
.list th { height: 25px; }
.list .end { text-align: right; }
.list .sort { color: #bbb; }

/* Modal */
.modal { z-index: 2; align-self: start; margin: 22px 27px; background: #fff; border-radius: 6px; box-shadow: 0 0 4px rgba(0, 0, 0, 0.3); }
.modal-header { display: flex; align-items: center; justify-content: space-between; height: 48px; padding: 0 12px; border-bottom: 1px solid #dee2e6; }
.modal-header h1 { display: flex; align-items: center; margin: 0; font-size: 14px; font-weight: 600; }
.modal-header h1 svg { width: 16px; height: 16px; margin-right: 7px; }
.modal-close svg { width: 12px; height: 12px; display: block; }
.modal-body { padding: 12px; border-bottom: 1px solid #dee2e6; }
.nav-tabs { display: flex; border-bottom: 1px solid #dee2e6; }
.nav-tabs a { display: flex; align-items: center; height: 32px; margin-bottom: -1px; padding: 0 11px; border: 1px solid transparent; color: #0d6efd; }
.nav-tabs a.active { color: #000; background: #fff; border-color: #dee2e6 #dee2e6 #fff; border-radius: 5px 5px 0 0; }
.nav-tabs svg { height: 12px; margin-right: 2px; }
.nav-tabs .narrow { width: 10px; }
.nav-tabs .wide { width: 14px; }
.tab-content { padding: 16px 12px 0; }
h2, h3 { display: flex; align-items: center; height: 20px; margin: 0; font-size: 12px; font-weight: 600; }
h2 svg { width: 14px; height: 12px; margin-right: 2px; }
h3 svg { width: 12px; height: 13px; margin-right: 4px; }
h2 { margin: 1px 0 5px; }
h3 { margin: 21px 0 4px; }

.map { position: relative; height: 172px; margin-bottom: 15px; border: 1px solid #dee2e6; border-radius: 6px; overflow: hidden; background: #f2efe9; }
.map-tiles { display: block; width: 100%; height: 170px; }
.map-controls { position: absolute; left: 7px; top: 7px; }
.zoom { width: 25px; border: 1px solid #bbb; border-radius: 3px; background: #fff; }
.zoom button { display: block; width: 23px; height: 22px; font-size: 18px; font-weight: 600; line-height: 20px; color: #000; }
.zoom button + button { height: 23px; border-top: 1px solid #ccc; font-weight: normal; }
.layers { display: flex; align-items: center; justify-content: center; width: 34px; height: 34px; margin: 9px 0 0 1px; border-radius: 4px; background: #fff; box-shadow: 0 3px 10px rgba(0, 0, 0, 0.15); }
.layers svg { width: 22px; height: 22px; }
.attribution { position: absolute; right: 0; bottom: 0; padding: 0 3px 0 4px; background: rgba(255, 255, 255, 0.8); font-family: "Liberation Sans", Arial, sans-serif; font-size: 9px; line-height: 12px; color: #333; }
.attribution svg { margin-right: 2px; }
.attribution a { color: #0078a8; }

.row { display: grid; grid-template-columns: 1fr 1fr; gap: 12px; }
.field label { display: block; height: 20px; margin-bottom: 4px; line-height: 20px; }
.group { display: flex; height: 29px; border: 1px solid #dee2e6; border-radius: 4px; overflow: hidden; }
.group span { display: flex; align-items: center; padding: 0 9px; background: #f1f4ff; border-right: 1px solid #dee2e6; }
.group svg { width: 12px; height: 12px; }
.group svg.narrow { width: 9px; }
.group input { flex: 1; min-width: 0; border: none; outline: none; padding: 0 9px; font: inherit; color: #212529; background: #fff; }
.open-map { display: flex; align-items: center; margin-top: 12px; font-family: Roboto, "Open Sans", sans-serif; }
.open-map span { margin-right: 4px; }
.open-map a { display: flex; align-items: center; height: 24px; padding: 0 6px; border: 1px solid; font-size: 11px; }
.open-map svg { width: 11px; height: 11px; margin-right: 2px; }
.open-map b { margin-right: 1px; }
.open-map .google { color: #dc3545; border-radius: 3px 0 0 3px; }
.open-map .yandex { color: #ffc107; border-radius: 0 3px 3px 0; margin-left: -1px; }
hr { margin: 7px 0 6px; border: none; border-top: 1px solid #c8c9ca; }

.modal-footer { display: flex; justify-content: flex-end; gap: 6px; padding: 12px; }
.modal-footer button { display: flex; align-items: center; height: 29px; padding: 0 9px; border: 1px solid #0d6efd; border-radius: 4px; font-family: Roboto, "Open Sans", sans-serif; font-size: 12px; }
.modal-footer svg { width: 12px; height: 12px; margin-right: 2px; }
.btn-edit { color: #0d6efd; }
.modal-footer .btn-close { color: #fff; background: #6c757d; border-color: #6c757d; }

/* Vazifalar paneli */
.taskbar { display: flex; align-items: center; height: 40px; background: #1b1f24; color: #fff; }
.start { width: 48px; height: 40px; display: flex; align-items: center; justify-content: center; }
.task-search { display: flex; align-items: center; width: 344px; height: 40px; padding-left: 12px; background: #33373d; }
.task-search input { flex: 1; min-width: 0; margin-left: 10px; padding: 0; border: none; outline: none; background: none; font-family: inherit; font-size: 14px; color: #fff; }
.task-search input::placeholder { color: #a0a3a7; }
.apps { display: flex; gap: 3px; margin-left: 4px; }
.apps button { display: flex; align-items: center; justify-content: center; width: 46px; height: 38px; border: 1px solid transparent; }
.apps svg { width: 24px; height: 24px; }
.apps svg.cloud { width: 18px; height: 16px; }
.apps .current { background: #75787b; border-color: #d8d8d8; }
.apps .open { background: #464a4e; border-color: #6c6f73; }
.apps .blue { color: #2168c4; }
.apps .alert { background: linear-gradient(#dcc42c, #d97a22); border-color: #e8cf6a; }
.weather { display: flex; align-items: center; gap: 7px; height: 40px; margin-left: auto; padding: 0 9px 0 12px; background: #22282d; font-size: 14px; }
.tray { display: flex; align-items: center; gap: 10px; height: 40px; padding: 0 31px 0 14px; background: #1c1e22; }
.lang { font-size: 12px; }
.clock { text-align: center; font-size: 11px; line-height: 18px; }
.notes { position: relative; margin-left: 7px; }
.notes svg { display: block; }
.notes b { position: absolute; left: 7px; top: 7px; width: 16px; height: 16px; border: 1px solid #888; border-radius: 8px; background: #333; font-size: 10px; font-weight: normal; line-height: 14px; text-align: center; }
```
